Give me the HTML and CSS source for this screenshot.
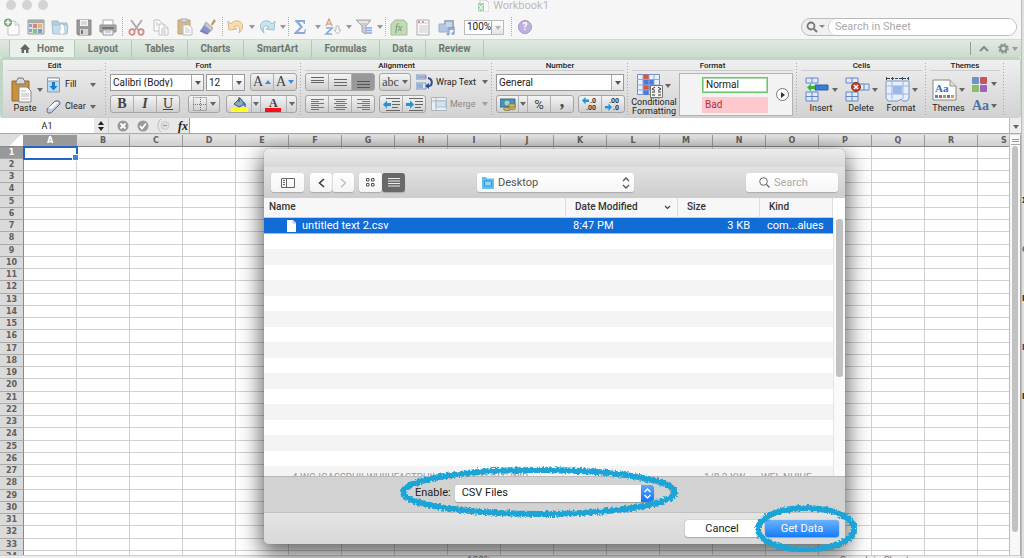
FILE: index.html
```html
<!DOCTYPE html>
<html lang="en">
<head>
<meta charset="utf-8">
<title>Workbook1</title>
<link rel="stylesheet" href="styles.css">
</head>
<body>
<div class="screen">
<main class="window">
  <header class="titlebar">
    <div class="lights"><i></i><i></i><i></i></div>
    <h1 class="title"><svg width="11" height="12" viewBox="0 0 11 12"><path d="M2 0h6l3 3v9H2z" fill="#fafafa" stroke="#ccc"/><path d="M0 3h6v8H0z" fill="#a9d3b0"/><path d="M1 5l4 5M5 5l-4 5" stroke="#fff"/></svg>Workbook1</h1>
  </header>

  <div class="toolbar">
    <button class="tool" aria-label="New"><svg width="18" height="18" viewBox="0 0 18 18"><path d="M5 3h7l4 4v10H5z" fill="#fcfcfc" stroke="#c4c4c4"/><path d="M12 3v4h4" fill="none" stroke="#c4c4c4"/><circle cx="5" cy="4.500" r="4" fill="#76ad79"/><path d="M5 2v5M2.500 4.500h5" stroke="#fff" stroke-width="1.500"/></svg></button>
    <button class="tool" aria-label="Gallery"><svg width="18" height="18" viewBox="0 0 18 18"><path d="M1 2h16v14H1z" fill="#ddd" stroke="#999"/><path d="M1 2h16v3H1z" fill="#aaa"/><path d="M2 6h3v3H2zM2 11h3v3H2z" fill="#8aa6cf"/><path d="M6 6h4v4H6z" fill="#d98678"/><path d="M11 6h4v4h-4z" fill="#e7b869"/><path d="M6 11h4v4H6z" fill="#8ebd84"/><path d="M11 11h4v4h-4z" fill="#7e99cc"/></svg></button>
    <button class="tool" aria-label="Open"><svg width="18" height="18" viewBox="0 0 18 18"><path d="M1 3h6l1 2h8v10H2z" fill="#b6cddd" stroke="#9fbace"/><path d="M1 7h16l-1 9H2z" fill="#c6dae7" stroke="#a7c0d1"/><path d="M9 6c5 0 5 4 4 7h2l-4 4-4-4h2c1-3 1-5 0-7z" fill="#fff" stroke="#aac2d3" stroke-width=".6"/></svg></button>
    <button class="tool" aria-label="Save"><svg width="16" height="17" viewBox="0 0 16 17"><path d="M1 1h14v15H2l-1-1z" fill="#999" stroke="#858585"/><path d="M4 1h8v6H4z" fill="#f5f5f5"/><path d="M5 3h6M5 5h6" stroke="#bbb"/><path d="M4 10h8v6H4z" fill="#d6d6d6"/><path d="M5 11h2v4H5z" fill="#777"/></svg></button>
    <button class="tool" aria-label="Print"><svg width="18" height="17" viewBox="0 0 18 17"><path d="M4 1h10v6H4z" fill="#fff" stroke="#aaa"/><path d="M1 6h16v7H1z" fill="#aaa" stroke="#8e8e8e"/><path d="M3 8h12v2H3z" fill="#777"/><path d="M4 11h10v5H4z" fill="#f5f5f5" stroke="#999"/><path d="M6 13h6" stroke="#8bb4cf"/></svg></button>
    <span class="dots"></span>
    <button class="tool" aria-label="Cut"><svg width="17" height="17" viewBox="0 0 17 17" fill="none"><path d="M3 1l8 11M14 1L6 12" stroke="#aaa" stroke-width="1.800"/><ellipse cx="4" cy="13" rx="2.600" ry="2.800" stroke="#d28a84" stroke-width="1.800"/><ellipse cx="13" cy="13" rx="2.600" ry="2.800" stroke="#d28a84" stroke-width="1.800"/></svg></button>
    <button class="tool" aria-label="Copy"><svg width="17" height="17" viewBox="0 0 17 17" fill="#fbfbfb" stroke="#c2c2c2"><path d="M2 1h5l3 3v8H2z"/><path d="M7 5h5l4 4v7H7z"/><path d="M12 5v4h4M4 4h2M4 6h2M9 10h4M9 12h5M9 14h5" fill="none"/></svg></button>
    <button class="tool" aria-label="Paste"><svg width="17" height="18" viewBox="0 0 17 18"><path d="M2 2h12v14H2z" fill="#d6b88c" stroke="#bd9f73"/><path d="M5 1h6v3H5z" fill="#ddd" stroke="#aaa"/><path d="M7 7h6l3 3v7H7z" fill="#fbfbfb" stroke="#bbb"/><path d="M9 10h3M9 12h5M9 14h5" stroke="#ccc"/></svg></button>
    <button class="tool" aria-label="Format painter"><svg width="18" height="18" viewBox="0 0 18 18"><path d="M12 6l3-5 2 2-4 5z" fill="#c19a6c"/><path d="M7 4l7 6-2 3-7-6z" fill="#c9c9c9" stroke="#aaa"/><path d="M5 7l7 6-3 3c-3 1-5-1-8-3z" fill="#8c90d1"/><path d="M1 13c3 0 5 1 8 3" stroke="#6e73c0" fill="none"/></svg></button>
    <span class="dots"></span>
    <button class="tool menu" aria-label="Undo"><svg width="18" height="16" viewBox="0 0 18 16"><path d="M1 2l1 9 8-1-3-2c4-3 7 0 5 6 6-5 4-13-3-12-2 0-4 1-5 3z" fill="#f7dcb4" stroke="#dcb887"/></svg><b class="tri"></b></button>
    <button class="tool menu" aria-label="Redo"><svg width="18" height="16" viewBox="0 0 18 16"><path d="M17 2l-1 9-8-1 3-2c-4-3-7 0-5 6C0 9 2 1 9 2c2 0 4 1 5 3z" fill="#c9e2ef" stroke="#9cc0d6"/></svg><b class="tri"></b></button>
    <span class="dots"></span>
    <button class="tool menu" aria-label="AutoSum"><svg width="14" height="16" viewBox="0 0 14 16"><path d="M2 1h10v4h-1l-1-2H6l4 5-5 5h6l1-3h1l-1 5H1v-1l6-6-5-6z" fill="#8ba9de"/></svg><b class="tri"></b></button>
    <button class="tool menu" aria-label="Sort"><svg width="18" height="18" viewBox="0 0 18 18" fill="none"><path d="M2 8l3-7 3 7M3 6h4" stroke="#dfa487" stroke-width="1.500"/><path d="M2 10h6l-6 6h6" stroke="#8ba9de" stroke-width="1.700"/><path d="M12 8h3v4h2l-3.500 4-3.500-4h2z" stroke="#bbb" fill="#f5f5f5"/></svg><b class="tri"></b></button>
    <button class="tool menu" aria-label="Filter"><svg width="18" height="16" viewBox="0 0 18 16"><path d="M1 1h15l-5 6v8l-4-2V7z" fill="#ccc" stroke="#a8a8a8"/><path d="M4 3h9" stroke="#fff"/><path d="M11 9h6M11 11.500h6M11 14h6" stroke="#8ba9de" stroke-width="1.300"/></svg><b class="tri"></b></button>
    <span class="dots"></span>
    <button class="tool" aria-label="Formula builder"><svg width="18" height="17" viewBox="0 0 18 17"><path d="M5 1h9l3 3v12H1V5z" fill="#c3dab7" stroke="#a5c096"/><text x="5" y="12" class="svg-fx">fx</text></svg></button>
    <button class="tool" aria-label="Toolbox"><svg width="14" height="17" viewBox="0 0 14 17"><path d="M1 1h12v15H1z" fill="#fafafa" stroke="#aaa"/><path d="M1 4h12M3 7h9M3 9h9M3 11h9M3 13h9" stroke="#ccc"/><path d="M2 2h2v2H2zM6 2h2v2H6z" fill="#d99a8c"/></svg></button>
    <button class="tool" aria-label="Media browser"><svg width="18" height="17" viewBox="0 0 18 17"><path d="M6 1h10v10H6z" fill="#a3adb9"/><path d="M1 5h9v8H1z" fill="#b2c7e0" stroke="#9bafca"/><path d="M8 3h6v5H8z" fill="#c3d7ea"/><path d="M11 15V9l5-1v6" fill="none" stroke="#83a0d0" stroke-width="1.300"/><circle cx="10" cy="15" r="1.500" fill="#8ca7d4"/><circle cx="15" cy="14.500" r="1.500" fill="#8ca7d4"/></svg></button>
    <label class="combo zoom"><select aria-label="Zoom"><option>100%</option></select></label>
    <span class="dots"></span>
    <button class="tool" aria-label="Help"><span class="help">?</span></button>
    <label class="search"><svg width="22" height="14" viewBox="0 0 22 14"><circle cx="6" cy="6" r="3.500" fill="none" stroke="#777" stroke-width="1.800"/><path d="M9 9l3 3" stroke="#777" stroke-width="2"/><path d="M14 5h6l-3 3z" fill="#888"/></svg><input type="search" placeholder="Search in Sheet" aria-label="Search in Sheet"></label>
  </div>

  <nav class="tabs">
    <button class="tab home"><svg width="10" height="9" viewBox="0 0 10 9"><path d="M5 0l5 5H8.500v4H6V6H4v3H1.500V5H0z" fill="#666"/></svg>Home</button>
    <button class="tab w57">Layout</button>
    <button class="tab w56">Tables</button>
    <button class="tab w56">Charts</button>
    <button class="tab w68">SmartArt</button>
    <button class="tab w68">Formulas</button>
    <button class="tab w46">Data</button>
    <button class="tab w58">Review</button>
    <span class="tab-tools"><svg width="10" height="6" viewBox="0 0 10 6"><path d="M1 5l4-4 4 4" fill="none" stroke="#888" stroke-width="2"/></svg><svg width="11" height="11" viewBox="0 0 11 11"><circle cx="5.500" cy="5.500" r="3" fill="none" stroke="#8b918c" stroke-width="2"/><circle cx="5.500" cy="5.500" r="4.500" fill="none" stroke="#8b918c" stroke-width="1.600" stroke-dasharray="1.800 1.730"/></svg><b class="tri"></b></span>
  </nav>

  <section class="ribbon">
    <div class="group edit"><h2>Edit</h2><div class="body">
      <button class="big"><span class="pic"><svg width="21" height="26" viewBox="0 0 21 26"><path d="M1 4h17v20H1z" fill="#c8913c" stroke="#96692a"/><path d="M5 5c0-2 2-2 2-4h5c0 2 2 2 2 4v2H5z" fill="#d8d8d8" stroke="#777"/><path d="M8 10h8l4 4v11H8z" fill="#fafafa" stroke="#888"/><path d="M10 14h5M10 17h8M10 19h8M10 22h8" stroke="#bbb"/></svg><b class="tri"></b></span>Paste</button>
      <div class="stack">
        <button class="flat"><svg width="14" height="16" viewBox="0 0 14 16"><path d="M1 1h12v14H1z" fill="#b6dcf3" stroke="#8a9ba8"/><path d="M1 1h12v3H1z" fill="#fff" stroke="#8a9ba8"/><path d="M5.500 5h3v4H11l-4 4.500L3 9h2.500z" fill="#2277c9"/></svg><span class="lab">Fill</span><b class="tri"></b></button>
        <button class="flat"><svg width="15" height="14" viewBox="0 0 15 14"><path d="M1 9l7-7q1-1 2-1h3q1 1 1 3l-8 8q-1 1-2 1H2q-1-1-1-4z" fill="#c3cddd" stroke="#5f6d80"/><path d="M2 8l7-6 4 0-7 7z" fill="#f4f7fb"/></svg><span class="lab">Clear</span><b class="tri"></b></button>
      </div></div></div>

    <div class="group font"><h2>Font</h2><div class="body rows">
      <div class="line">
        <label class="combo face"><select aria-label="Font"><option>Calibri (Body)</option></select></label>
        <label class="combo size"><select aria-label="Font size"><option>12</option></select></label>
        <span class="seg push"><button class="serif big-a">A<b class="tri up"></b></button><button class="serif big-a">A<b class="tri blue"></b></button></span>
      </div>
      <div class="line">
        <span class="seg"><button class="serif strong">B</button><button class="serif ital">I</button><button class="serif under">U</button></span>
        <span class="seg mid"><button class="wide" aria-label="Borders"><svg width="14" height="14" viewBox="0 0 14 14"><path d="M.5.5h13v13H.5zM7.500 0v14M0 7.500h14" fill="none" stroke="#777" stroke-dasharray="1 1"/></svg><b class="tri"></b></button></span>
        <span class="seg push"><button class="w25" aria-label="Fill color"><svg width="17" height="15" viewBox="0 0 17 15"><path d="M3 7l6-6 5 6-6 3z" fill="#8fa9c0" stroke="#3d5468"/><path d="M8 0v5" stroke="#444"/><path d="M13 5c2 1 2 3 2 5-2 0-2-3-4-4z" fill="#247ac4"/><path d="M0 11h17v4H0z" fill="#ffff28"/></svg></button><button class="w9" aria-label="Fill colors"><b class="tri"></b></button><button class="w26" aria-label="Font color"><svg width="17" height="15" viewBox="0 0 17 15"><text x="4" y="10" class="svg-a">A</text><path d="M0 11h16v4H0z" fill="#fb0d1b"/></svg></button><button class="w9" aria-label="Font colors"><b class="tri"></b></button></span>
      </div></div></div>

    <div class="group align"><h2>Alignment</h2><div class="body rows">
      <div class="line">
        <span class="seg"><button aria-label="Top"><svg width="13" height="12"><path d="M0 1.500h13M0 4.500h13M0 6.500h13" stroke="#666"/></svg></button><button aria-label="Middle"><svg width="13" height="12"><path d="M0 3.500h13M0 6.500h13M0 9.500h13" stroke="#666"/></svg></button><button class="on" aria-label="Bottom"><svg width="13" height="12"><path d="M0 5.500h13M0 8.500h13M0 11.500h13" stroke="#555"/></svg></button></span>
        <span class="seg"><button class="wide serif">abc<b class="tri"></b></button></span>
        <button class="flat wrap"><svg width="17" height="16" viewBox="0 0 17 16"><path d="M0 1h10v4H0zM0 9h10v6H0z" fill="#dbe7f5" stroke="#7c97bd"/><path d="M1 3h6M1 11h6M1 13h6" stroke="#4f74b0"/><path d="M7 3h3" stroke="#e33"/><path d="M12 4c5 1 5 8 0 8" fill="none" stroke="#2b4f94" stroke-width="2"/><path d="M13 9v6l-4-3z" fill="#2b4f94"/></svg><span class="lab">Wrap Text</span><b class="tri"></b></button>
      </div>
      <div class="line">
        <span class="seg"><button aria-label="Left"><svg width="13" height="12"><path d="M0 1.500h13M0 3.500h8M0 5.500h13M0 7.500h8M0 9.500h13M0 11.500h8" stroke="#777"/></svg></button><button aria-label="Center"><svg width="13" height="12"><path d="M0 1.500h13M2 3.500h9M0 5.500h13M2 7.500h9M0 9.500h13M2 11.500h9" stroke="#777"/></svg></button><button aria-label="Right"><svg width="13" height="12"><path d="M0 1.500h13M5 3.500h8M0 5.500h13M5 7.500h8M0 9.500h13M5 11.500h8" stroke="#777"/></svg></button></span>
        <span class="seg"><button aria-label="Decrease indent"><svg width="17" height="13" viewBox="0 0 17 13"><path d="M3 .5h14M9 3.500h8M9 6.500h8M9 9.500h6M3 12.500h14" stroke="#666"/><path d="M0 6.500l4-4V5h4v3H4v2.500z" fill="#2196d6"/></svg></button><button aria-label="Increase indent"><svg width="17" height="13" viewBox="0 0 17 13"><path d="M3 .5h14M9 3.500h8M9 6.500h8M9 9.500h6M3 12.500h14" stroke="#666"/><path d="M8 6.500l-4-4V5H0v3h4v2.500z" fill="#2196d6"/></svg></button></span>
        <button class="flat wrap dim"><svg width="16" height="14" viewBox="0 0 16 14"><path d="M.5.5h15v13H.5zM5 0v14M0 4h16" fill="#e9eef2" stroke="#abb7c0"/><path d="M5 4h10v6H5z" fill="#cfe2ee" stroke="#a8bfce"/></svg><span class="lab">Merge</span><b class="tri"></b></button>
      </div></div></div>

    <div class="group number"><h2>Number</h2><div class="body rows">
      <div class="line"><label class="combo gen"><select aria-label="Number format"><option>General</option></select></label></div>
      <div class="line">
        <span class="seg"><button class="w22" aria-label="Currency"><svg width="16" height="13" viewBox="0 0 16 13"><path d="M0 1h15v8H0z" fill="#4a90ba" stroke="#376d91"/><circle cx="7" cy="5" r="2.500" fill="#a9d5b5"/><g fill="#d6b661" stroke="#7b6a38" stroke-width=".7"><ellipse cx="7" cy="11" rx="3.500" ry="1.700"/><ellipse cx="12" cy="10" rx="3.500" ry="1.700"/><ellipse cx="12" cy="7.500" rx="3.500" ry="1.700"/></g></svg></button><button class="w9" aria-label="Currencies"><b class="tri"></b></button><button class="sym">%</button><button class="serif comma">,</button></span>
        <span class="seg"><button aria-label="Increase decimal"><svg width="16" height="16" viewBox="0 0 16 16"><text x="8" y="7" class="svg-n">.0</text><text x="4" y="14" class="svg-n">.00</text><path d="M0 4.500L3.500 1v2.500H7v2.500H3.500v2.500z" fill="#2196d6"/></svg></button><button aria-label="Decrease decimal"><svg width="16" height="16" viewBox="0 0 16 16"><text x="4" y="7" class="svg-n">.00</text><text x="8" y="14" class="svg-n">.0</text><path d="M7 11L3.500 7.500V10H0v2.500h3.500V15z" fill="#2196d6"/></svg></button></span>
      </div></div></div>

    <div class="group format"><h2>Format</h2><div class="body">
      <button class="big cond"><span class="pic"><svg width="26" height="24" viewBox="0 0 26 24"><path d="M.5.500h22v20H.5z" fill="#e8f0fb" stroke="#6d8fc9"/><path d="M6 .5h6v5H6zM6 11h11v5H6z" fill="#e0513e"/><path d="M6 6h11v5H6zM6 16h6v5H6z" fill="#4a7bd6"/><path d="M6 0v21M12 0v21M17 0v21M0 5.500h23M0 11h23M0 16h23" fill="none" stroke="#8fa9d6"/><path d="M13.500 11.500h12v12h-12z" fill="#f3f3f3" stroke="#777"/><path d="M18 13l-3 2 3 1.500M15 18h3M21 13l3 2-3 1.500M21 18h3M15 21h3M21 21h3" fill="none" stroke="#333"/></svg><b class="tri"></b></span>Conditional<br>Formatting</button>
      <div class="gallery"><div class="styles"><button class="style normal">Normal</button><button class="style bad">Bad</button></div><button class="more" aria-label="More styles"></button></div>
    </div></div>

    <div class="group cells"><h2>Cells</h2><div class="body">
      <button class="big"><span class="pic"><svg width="25" height="25" viewBox="0 0 25 25"><path d="M1 1h12v5H1zM7 1v5M1 15h12v9H1zM7 15v9M1 19.500h12" fill="#dfe9fa" stroke="#6485c4"/><path d="M10 8h13v5H10z" fill="#3c78d8" stroke="#2e5fae"/><path d="M2 10.500l4-4V9h4v3H6v2.500z" fill="#42b047"/></svg><b class="tri"></b></span>Insert</button>
      <button class="big"><span class="pic"><svg width="25" height="25" viewBox="0 0 25 25"><path d="M1 1h12v5H1zM7 1v5M1 15h12v9H1zM7 15v9M1 19.500h12M13 7h11v6H13zM19 7v6" fill="#dfe9fa" stroke="#6485c4"/><circle cx="11" cy="10" r="4.500" fill="#c6442a" stroke="#8b2d1a"/><path d="M9 8l4 4M13 8l-4 4" stroke="#fff" stroke-width="1.500"/></svg><b class="tri"></b></span>Delete</button>
      <button class="big"><span class="pic"><svg width="25" height="25" viewBox="0 0 25 25"><path d="M1 4h23v17l-2 3h-4l-2-2-3 2H3l-2-3z" fill="#e6eefb" stroke="#7c96c6"/><path d="M7 4v18M18 4v18M1 9h23M1 17h23" stroke="#9fb4db"/><path d="M8 9h9v8H8z" fill="#9ab8ee"/><path d="M2 1.500h21" stroke="#345" stroke-dasharray="3 1"/><path d="M1.500 0v3M7.500 0v3M17.500 0v3M23.500 0v3" stroke="#345"/></svg><b class="tri"></b></span>Format</button>
    </div></div>

    <div class="group themes"><h2>Themes</h2><div class="body">
      <button class="big"><span class="pic"><svg width="25" height="22" viewBox="0 0 25 22"><path d="M1 1h17l6 6v14H1z" fill="#fcfcfc" stroke="#888"/><path d="M18 1v6h6" fill="#ddd" stroke="#999"/><text x="3" y="13" class="svg-aa">Aa</text><path d="M3 16h3v3H3z" fill="#4a86c5"/><path d="M7 16h3v3H7z" fill="#c55"/><path d="M11 16h3v3h-3z" fill="#7ab35c"/><path d="M15 16h3v3h-3z" fill="#8a64b0"/><path d="M19 16h3v3h-3z" fill="#e8954a"/></svg><b class="tri"></b></span>Themes</button>
      <div class="stack themes-stack">
        <button class="flat" aria-label="Colors"><svg width="16" height="15" viewBox="0 0 16 15"><rect width="7" height="7" rx="1" fill="#6996c4"/><rect x="8" width="7" height="7" rx="1" fill="#c25560"/><rect y="8" width="7" height="7" rx="1" fill="#8cbc66"/><rect x="8" y="8" width="7" height="7" rx="1" fill="#9a62bb"/></svg><b class="tri"></b></button>
        <button class="flat aa">Aa<b class="tri"></b></button>
      </div></div></div>
  </section>

  <div class="formula">
    <input class="name" value="A1" aria-label="Name box">
    <span class="stepper"><b class="tri up"></b><b class="tri"></b></span>
    <span class="ftools">
      <button aria-label="Cancel entry"><svg width="12" height="12" viewBox="0 0 12 12"><circle cx="6" cy="6" r="5.500" fill="#999"/><path d="M3.500 3.500l5 5M8.500 3.500l-5 5" stroke="#fff" stroke-width="1.800"/></svg></button>
      <button aria-label="Accept entry"><svg width="12" height="12" viewBox="0 0 12 12"><circle cx="6" cy="6" r="5.500" fill="#999"/><path d="M3 6l2 2.500 4-5" fill="none" stroke="#fff" stroke-width="1.800"/></svg></button>
      <button aria-label="Options"><svg width="13" height="13" viewBox="0 0 13 13"><path d="M4 0C0 2 0 11 4 13" fill="none" stroke="#bbb"/><circle cx="8" cy="6.500" r="4" fill="#ddd" stroke="#ccc"/><path d="M6 6.500h4" stroke="#999"/></svg></button>
      <button class="fx" aria-label="Function">fx</button>
    </span>
    <input class="value" aria-label="Formula">
    <button class="expand" aria-label="Expand"><b class="tri"></b></button>
  </div>

  <div class="sheet">
    <div class="grid-clip"><table class="grid" id="grid"></table></div>
    <div class="scroll"><span class="split"></span><span class="thumb"></span></div>
  </div>
  <div class="behind-bottom"><span>100%</span><span>Search in Sheet</span></div>

  <section class="dialog" role="dialog" aria-label="Choose a file">
    <div class="dtitle"></div>
    <div class="dtools">
      <button class="dbtn side" aria-label="Sidebar"><svg width="14" height="10" viewBox="0 0 14 10"><path d="M.5.500h13v9H.5zM5.500 0v10M2 2.500h2M2 4.500h2M2 6.500h2" fill="none" stroke="#666"/></svg></button>
      <span class="pair"><button class="dbtn" aria-label="Back"><svg width="7" height="10" viewBox="0 0 7 10"><path d="M6 1L1.500 5 6 9" fill="none" stroke="#333" stroke-width="1.500"/></svg></button><button class="dbtn" aria-label="Forward"><svg width="7" height="10" viewBox="0 0 7 10"><path d="M1 1l4.500 4L1 9" fill="none" stroke="#bbb" stroke-width="1.300"/></svg></button></span>
      <span class="pair views"><button class="dbtn" aria-label="Icon view"><svg width="9" height="9" viewBox="0 0 9 9"><path d="M.5.500h2.500v2.500H.5zM5.500.500h2.500v2.500H5.500zM.5 5.500h2.500v2.500H.5zM5.500 5.500h2.500v2.500H5.500z" fill="none" stroke="#555"/></svg></button><button class="dbtn dark" aria-label="List view"><svg width="12" height="9" viewBox="0 0 12 9"><path d="M0 .5h12M0 3h12M0 5.500h12M0 8h12" stroke="#eee"/></svg></button></span>
      <label class="place"><svg width="14" height="12" viewBox="0 0 14 12"><path d="M1 0h4l1 1.500h7V11q0 1-1 1H2q-1 0-1-1z" fill="#5fbff0"/><path d="M3.500 4h7v5h-7z" fill="#8fd5f8" stroke="#2d93cf"/></svg><select aria-label="Folder"><option>Desktop</option></select><svg width="8" height="12" viewBox="0 0 8 12"><path d="M1 4l3-3 3 3M1 8l3 3 3-3" fill="none" stroke="#555" stroke-width="1.300"/></svg></label>
      <label class="dsearch"><svg width="11" height="11" viewBox="0 0 11 11"><circle cx="4.500" cy="4.500" r="3.800" fill="none" stroke="#666"/><path d="M7.500 7.500L10.500 10.500" stroke="#666" stroke-width="1.300"/></svg><input type="search" placeholder="Search" aria-label="Search files"></label>
    </div>
    <div class="list">
      <table class="files">
        <colgroup><col><col class="c-date"><col class="c-size"><col class="c-kind"></colgroup>
        <thead><tr><th>Name</th><th><span class="sort">Date Modified<svg width="7" height="5" viewBox="0 0 7 5"><path d="M1 1l2.500 2.500L6 1" fill="none" stroke="#444" stroke-width="1.200"/></svg></span></th><th>Size</th><th>Kind</th></tr></thead>
        <tbody><tr><td><span class="file"><svg width="9" height="12" viewBox="0 0 9 12"><path d="M0 0h6l3 3v9H0z" fill="#fff"/><path d="M6 0v3h3" fill="none" stroke="#9bbce8"/></svg>untitled text 2.csv</span></td><td>8:47 PM</td><td>3 KB</td><td>com...alues</td></tr></tbody>
      </table>
      <div class="stripes"><div class="cut"><span>4 WC-ICASSRUII WUIIUFASTRUII FINANICIALIV S WIR</span><span>1/8 2 KW</span><span>WFI  NUIUF</span></div></div>
      <div class="dscroll"><span></span></div>
    </div>
    <div class="enable"><label for="enable">Enable:</label><span class="popup"><select id="enable"><option>CSV Files</option></select><svg width="13" height="16" viewBox="0 0 13 16"><path d="M3.500 6.500l3-3 3 3M3.500 9.500l3 3 3-3" fill="none" stroke="#fff" stroke-width="1.400"/></svg></span></div>
    <footer class="actions"><button class="act">Cancel</button><button class="act primary">Get Data</button></footer>
    <svg class="marks" width="620" height="90" viewBox="0 0 620 90">
      <defs><filter id="rough" x="-10%" y="-20%" width="120%" height="140%"><feTurbulence type="fractalNoise" baseFrequency=".45" numOctaves="2" seed="4"/><feDisplacementMap in="SourceGraphic" scale="5" xChannelSelector="R" yChannelSelector="G"/></filter></defs>
      <g fill="none" stroke="#1ba4d6" stroke-width="6" filter="url(#rough)"><ellipse cx="155" cy="30" rx="136" ry="22"/><ellipse cx="422" cy="67" rx="48" ry="21"/></g>
    </svg>
  </section>
</main>
<aside class="behind"><i>x</i><i class="b1">o</i><i>r</i><i class="b2">r</i><i>n</i></aside>
</div>
<script src="grid.js"></script>
</body>
</html>
```

FILE: styles.css
```css
* { box-sizing: border-box; }
body { margin: 0; font: 10px/12px Roboto, "Liberation Sans", sans-serif; color: #222; }
button, input, select { font: inherit; color: inherit; margin: 0; padding: 0; border: 0; background: none; border-radius: 0; appearance: none; min-width: 0; outline: 0; }
svg { display: block; flex: none; }
h1, h2 { margin: 0; font-weight: 400; }
.screen { display: flex; height: 100vh; overflow: hidden; background: #ddd; }
.window { position: relative; flex: 1; min-width: 0; display: flex; flex-direction: column; overflow: hidden; background: #f6f6f6; }
.tri { display: inline-block; border: 3px solid transparent; border-top: 4px solid #666; border-bottom: 0; flex: none; }
.tri.up { border-top: 0; border-bottom: 4px solid #3c8fd6; }
.tri.blue { border-top-color: #3c8fd6; }

.titlebar { display: grid; grid-template-columns: 1fr auto 1fr; height: 15px; padding-left: 6px; flex: none; }
.lights { display: flex; gap: 6px; }
.lights i { width: 10px; height: 10px; border-radius: 50%; background: #d3d3d3; }
.title { display: flex; gap: 4px; font-size: 11px; color: #bbb; }

.toolbar { display: flex; align-items: center; height: 25px; flex: none; border-bottom: 1px solid #d3d8d3; padding-right: 4px; }
.tool { width: 24px; height: 20px; display: flex; align-items: center; justify-content: center; flex: none; }
.tool.menu { width: 31px; justify-content: space-between; padding-left: 3px; }
.tool .tri { border-top-color: #999; }
.dots { width: 4px; height: 20px; background: repeating-linear-gradient(#aaa 0 1px, transparent 1px 2px) 2px 0 / 1px 100% no-repeat; flex: none; }
.svg-fx { font: italic 10px "Liberation Serif", serif; fill: #6c8a60; }
.svg-a { font: bold 12px "Liberation Serif", serif; fill: #444; }
.svg-aa { font: bold 11px "Liberation Serif", serif; fill: #2c72bd; }
.svg-n { font: bold 7px Roboto, sans-serif; fill: #333; }
.combo { position: relative; display: flex; height: 17px; background: #fff; border: 1px solid #999; padding-left: 2px; }
.combo select { flex: 1; }
.combo::after { content: ""; width: 11px; border-left: 1px solid #aaa; background: linear-gradient(#fff, #e4e4e4); }
.combo::before { content: ""; position: absolute; right: 2px; top: 6px; border: 3px solid transparent; border-top: 4px solid #555; border-bottom: 0; }
.zoom { width: 40px; height: 15px; margin: 0 5px; border-color: #bbb; }
.zoom::before { opacity: .4; top: 5px; }
.help { width: 14px; height: 14px; border-radius: 50%; background: #bfb1dc; border: 1px solid #a798c6; color: #fff; font-weight: 700; line-height: 12px; }
.search { display: flex; align-items: center; width: 216px; height: 18px; margin-left: auto; border: 1px solid #bbb; border-radius: 9px; background: #f0f0f0; padding-left: 3px; overflow: hidden; }
.search input { flex: 1; align-self: stretch; margin-left: 1px; border-left: 1px solid #ccc; border-radius: 9px 0 0 9px; background: #fff; padding-left: 6px; font-size: 11px; }
::placeholder { color: #aaa; opacity: 1; }

.tabs { display: flex; height: 17px; background: linear-gradient(#e0eae1, #cbdbcd); padding-left: 9px; font-weight: 700; color: #6e756f; flex: none; }
.tab { border-right: 1px solid #b6c7b8; flex: none; }
.home { width: 66px; display: flex; align-items: center; justify-content: center; gap: 7px; background: #eaf1ea; border-left: 1px solid #b6c7b8; }
.w46 { width: 46px; } .w56 { width: 56px; } .w57 { width: 57px; } .w58 { width: 58px; } .w68 { width: 68px; }
.tab-tools { margin-left: auto; display: flex; align-items: center; gap: 6px; padding: 0 3px 0 8px; margin-top: 2px; height: 13px; border-left: 1px solid #999; }
.tab-tools svg + svg { margin-left: 3px; }
.tab-tools .tri { border-top-color: #999; margin-left: -3px; }

.ribbon { display: flex; height: 61px; flex: none; border: 3px solid #bfd6c5; border-width: 3px 1px 1px 3px; border-radius: 3px; background: linear-gradient(#efefef, #d2d2d2); }
.group { padding: 0 4px; display: flex; flex-direction: column; font-size: 9px; line-height: 9px; flex: none; background: repeating-linear-gradient(#aaa 0 1px, transparent 1px 3px) 100% 3px / 1px 52px no-repeat; }
.group h2 { font-size: 8px; font-weight: 500; text-align: center; height: 11px; line-height: 11px; border-bottom: 1px solid #ccc; margin: 0 0 2px; color: #222; }
.body { display: flex; flex: 1; }
.rows { flex-direction: column; gap: 4px; }
.line { display: flex; gap: 4px; height: 18px; align-items: center; }
.edit { width: 103px; } .font { width: 195px; } .align { width: 191px; } .number { width: 136px; } .format { flex: 1; } .cells { width: 129px; } .themes { width: 78px; }
.group:last-child { margin-right: 16px; }
.ribbon .combo { font-size: 10px; }
.face { width: 94px; } .size { width: 39px; margin-left: -2px; } .gen { flex: 1; }
.big { display: flex; flex-direction: column; align-items: center; flex: none; width: 40px; text-align: center; padding-top: 2px; height: 43px; }
.pic { display: flex; align-items: center; gap: 2px; height: 29px; }
.edit .big { width: 36px; margin-right: 3px; }
.edit .pic { gap: 5px; padding-left: 3px; }
.stack { display: flex; flex-direction: column; flex: 1; justify-content: space-around; }
.flat { display: flex; align-items: center; gap: 4px; }
.flat .lab { flex: 1; text-align: left; }
.edit .flat { padding-right: 6px; }
.edit .flat svg { width: 15px; }
.seg { display: flex; height: 18px; border: 1px solid #a5a5a5; border-radius: 3px; background: linear-gradient(#f4f4f4, #cfcfcf); }
.seg button { width: 23px; display: flex; align-items: center; justify-content: center; border-right: 1px solid #b0b0b0; gap: 2px; flex: none; }
.seg button:last-child { border-right: 0; width: 22px; }
.seg .wide:last-child { width: 30px; gap: 3px; }
.seg .w25 { width: 25px; } .seg .w9, .seg .w9:last-child { width: 9px; } .seg .w26 { width: 26px; } .seg .w22 { width: 22px; }
.seg .on { background: #999; }
.push { margin-left: auto; } .mid { margin-left: 4px; }
.serif { font: 12px/14px "Liberation Serif", serif; color: #444; }
.strong { font-weight: 700; font-size: 14px; }
.ital { font-style: italic; font-weight: 700; font-size: 14px; }
.under { text-decoration: underline; font-size: 14px; }
.big-a { font-size: 14px; }
.sym { font-size: 13px; line-height: 15px; color: #444; }
.comma { font-weight: 700; font-size: 18px; line-height: 16px; padding-bottom: 6px; }
.wrap { width: 72px; margin-left: 1px; }
.wrap:last-child { flex: 1; gap: 3px; }
.wrap .lab { white-space: nowrap; }
.dim { color: #888; } .dim .tri { opacity: .5; }
.format .body { justify-content: space-between; }
.format .big { width: 48px; padding-top: 0; margin-left: -2px; }
.format .pic { height: 26px; }
.gallery { display: flex; flex: 1; margin-left: 1px; align-items: center; justify-content: flex-end; gap: 8px; border: 1px solid #b2b2b2; background: #f3f3f3; height: 43px; padding-right: 3px; }
.styles { display: flex; flex-direction: column; gap: 4px; flex: 1; margin-left: 22px; }
.style { height: 16px; text-align: left; padding-left: 3px; font-size: 10px; line-height: 12px; }
.normal { border: 1px solid #6fc46f; outline: 1px solid #a9dca9; outline-offset: -2px; background: #fff; }
.bad { background: #ffc7ce; color: #b3303c; }
.more { width: 13px; height: 13px; border: 1px solid #777; border-radius: 50%; background: #fff; display: grid; place-items: center; }
.more::before { content: ""; border: 3px solid transparent; border-left: 4px solid #333; border-right: 0; }
.themes .big { width: 37px; }
.themes-stack .flat { gap: 3px; margin-left: 5px; }
.aa { font: bold 14px/14px "Liberation Serif", serif; color: #4673ac; }
.themes-stack .aa { gap: 2px; }

.formula { display: flex; height: 16px; flex: none; background: #e8e8e8; border-bottom: 1px solid #aaa; }
.name { width: 94px; background: #fff; text-align: center; font-size: 9px; }
.stepper { width: 15px; display: flex; flex-direction: column; gap: 2px; align-items: center; justify-content: center; border-right: 1px solid #ccc; }
.stepper .tri { border-top-color: #222; } .stepper .up { border-bottom-color: #222; }
.ftools { width: 81px; display: flex; align-items: center; gap: 8px; padding-left: 8px; border-right: 1px solid #999; }
.fx { font: italic bold 12px/14px "Liberation Serif", serif; }
.value { flex: 1; background: #fff; }
.expand { width: 12px; background: #eee; border-left: 1px solid #bbb; }

.sheet { flex: 1; min-height: 0; display: flex; border-top: 1px solid #ddd; background: #fff; }
.grid-clip { flex: 1; min-width: 0; overflow: hidden; border-right: 1px solid #bbb; }
.grid { width: 1031px; table-layout: fixed; border-collapse: separate; border-spacing: 0; font: bold 8px/10px "DejaVu Sans", sans-serif; color: #606060; }
.grid th, .grid td { padding: 0; height: 12px; border-right: 1px solid #d0d0d0; border-bottom: 1px solid #d0d0d0; }
.grid tr:nth-child(4n) td, .grid tr:nth-child(4n) th { height: 13px; }
.grid thead th { height: 12px; background: linear-gradient(#e6e6e6, #cfcfcf); border-right-color: #999; border-bottom-color: #888; }
.grid tbody th { background: #dadada; border-color: #aaa; border-right-color: #888; }
.grid .corner { width: 24px; background: linear-gradient(135deg, #ddd 60%, #fff 60%); }
.grid thead .sel, .grid tbody .sel { background: #999; color: #fff; }
.grid .active { position: relative; outline: 2px solid #2563c4; outline-offset: -1px; }
.active::after { content: ""; position: absolute; right: -3px; bottom: -3px; width: 5px; height: 5px; background: #3f83e0; border: 1px solid #fff; }
.scroll { width: 11px; background: #f8f8f8; display: flex; flex-direction: column; align-items: center; border-right: 1px solid #aaa; }
.split { width: 9px; height: 10px; border-bottom: 1px solid #aaa; background: linear-gradient(#999, #999) 1px 4px / 7px 1px no-repeat, linear-gradient(#999, #999) 1px 6px / 7px 1px no-repeat; }
.thumb { width: 6px; height: 93%; max-height: 386px; margin-top: 1px; border-radius: 3px; background: #c1c1c1; }
.behind-bottom { height: 3px; flex: none; background: #eee; overflow: hidden; display: flex; justify-content: space-between; padding: 0 112px 0 467px; border-top: 1px solid #ccc; color: #777; line-height: 9px; }
.behind { width: 3px; flex: none; background: #e0e0e0; border-left: 1px solid #bbb; overflow: hidden; padding-top: 194px; display: flex; flex-direction: column; gap: 38px; }
.behind i { font: bold 11px/11px Roboto, sans-serif; color: #333; }
.behind .b1 { color: #446ca8; } .behind .b2 { color: #314378; }

.dialog { position: absolute; left: 264px; top: 149px; width: 581px; height: 395px; display: flex; flex-direction: column; border-radius: 5px; background: #ddd; box-shadow: 0 0 1px #777, 0 8px 22px 3px rgba(0,0,0,.6); font-size: 11px; }
.dtitle { height: 18px; background: linear-gradient(#ececec, #d8d8d8); border-radius: 5px 5px 0 0; }
.dtools { height: 31px; display: flex; align-items: center; padding: 0 7px; background: linear-gradient(#e2e2e2, #cdcdcd); }
.dbtn { width: 22px; height: 19px; display: grid; place-items: center; background: linear-gradient(#fff, #f4f4f4); border-radius: 3px; box-shadow: 0 1px 1px #aaa; }
.side { width: 33px; margin-right: 6px; }
.pair { display: flex; margin-right: 5px; }
.pair .dbtn + .dbtn { border-left: 1px solid #ddd; }
.views .dbtn { width: 23px; }
.views .dbtn.dark { background: #696969; border-color: #696969; }
.place, .dsearch { display: flex; align-items: center; height: 19px; background: linear-gradient(#fff, #f6f6f6); border-radius: 3px; box-shadow: 0 1px 1px #aaa; color: #555; }
.place { width: 157px; margin-left: 67px; padding: 0 4px; gap: 3px; }
.place select { flex: 1; }
.dsearch { width: 92px; margin-left: auto; padding-left: 13px; gap: 4px; }
.dsearch input { width: 60px; }
.list { flex: 1; display: grid; grid-template: auto 1fr / 1fr 12px; background: #fff; min-height: 0; }
.files { width: 100%; table-layout: fixed; border-collapse: separate; border-spacing: 0; }
.c-date { width: 112px; } .c-size { width: 82px; } .c-kind { width: 73px; }
.files th { height: 20px; padding: 0 0 1px 9px; background: #f7f7f7; text-align: left; font-size: 10px; font-weight: 500; border-right: 1px solid #ddd; border-bottom: 1px solid #ccc; color: #333; }
.files th:first-child { padding-left: 5px; }
.sort { display: flex; justify-content: space-between; align-items: center; padding-right: 6px; }
.files td { height: 16px; padding: 0 0 0 7px; color: #fff; background: #116cd6; border-bottom: 1px solid #8dbaf0; line-height: 13px; white-space: nowrap; }
.files td:nth-child(3) { text-align: right; padding-right: 10px; }
.file { display: flex; align-items: center; gap: 6px; padding-left: 16px; }
.stripes { grid-row: 2; display: flex; background: repeating-linear-gradient(#fff 0 15px, #f4f4f4 15px 31px); }
.cut { flex: 1; align-self: flex-end; height: 4px; overflow: hidden; display: grid; grid-template-columns: 1fr 57px 72px; color: #999; padding-left: 28px; font-size: 10px; line-height: 12px; white-space: pre; }
.dscroll { grid-column: 2; grid-row: 1 / 3; margin-top: 19px; border-left: 1px solid #e4e4e4; background: #fafafa; padding: 2px; }
.dscroll span { display: block; height: 62%; border-radius: 3px; background: #c1c1c1; width: 7px; }
.enable { height: 37px; display: flex; align-items: center; gap: 4px; padding: 0 0 3px 151px; border-top: 1px solid #b8b8b8; border-bottom: 1px solid #c0c0c0; background: #d2d2d2; }
.popup { display: flex; width: 199px; height: 17px; background: #fff; border-radius: 3px; box-shadow: 0 1px 1px #999; overflow: hidden; }
.popup select { flex: 1; padding-left: 7px; }
.popup svg { height: 17px; background: linear-gradient(#5aa8fb, #1872f5); }
.actions { height: 31px; display: flex; align-items: center; justify-content: flex-end; gap: 6px; padding: 0 6px 0 0; background: linear-gradient(#e4e4e4, #d8d8d8); border-radius: 0 0 5px 5px; }
.act { width: 74px; height: 17px; background: #fff; border-radius: 3px; box-shadow: 0 0 1px #888, 0 1px 1px #aaa; }
.primary { background: linear-gradient(#6cb3fa, #147cfb); color: #fff; }
.marks { position: absolute; left: 120px; top: 313px; pointer-events: none; }
```

FILE: grid.js
```js
const letters = "ABCDEFGHIJKLMNOPQRS".split("");
const head = letters.map((c, i) => `<th class="${i ? "" : "sel"}">${c}</th>`).join("");
let rows = "";
for (let r = 1; r <= 34; r++) {
  const cells = letters.map((c, i) => `<td class="${r === 1 && i === 0 ? "active" : ""}"></td>`).join("");
  rows += `<tr><th class="${r === 1 ? "sel" : ""}">${r}</th>${cells}</tr>`;
}
document.getElementById("grid").innerHTML =
  `<thead><tr><th class="corner"></th>${head}</tr></thead><tbody>${rows}</tbody>`;
```
